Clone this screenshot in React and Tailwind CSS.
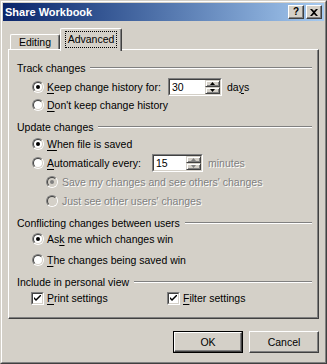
import React from "react";

const FONT = { fontFamily: '"Liberation Sans", Arial, sans-serif' };

function U({ children }) {
  return <span className="underline decoration-1 underline-offset-[2px]">{children}</span>;
}

function Radio({ checked, disabled }) {
  return (
    <span className="flex h-[12px] w-[12px] shrink-0 rounded-full border border-t-[#808080] border-l-[#808080] border-r-white border-b-white">
      <span
        className={
          "flex flex-1 items-center justify-center rounded-full border border-t-[#404040] border-l-[#404040] border-r-[#d4d0c8] border-b-[#d4d0c8] " +
          (disabled ? "bg-[#d4d0c8]" : "bg-white")
        }
      >
        {checked && (
          <span className={"h-[4px] w-[4px] rounded-full " + (disabled ? "bg-[#808080]" : "bg-black")} />
        )}
      </span>
    </span>
  );
}

function Check() {
  return (
    <span className="flex h-[13px] w-[13px] shrink-0 border border-t-[#808080] border-l-[#808080] border-r-white border-b-white">
      <span className="flex flex-1 items-center justify-center border border-t-[#404040] border-l-[#404040] border-r-[#d4d0c8] border-b-[#d4d0c8] bg-white">
        <svg width="7" height="7" viewBox="0 0 7 7">
          <path d="M0 2 L0 4 L2 6 L7 1 L7 -1 L2 4 Z" fill="#000" />
        </svg>
      </span>
    </span>
  );
}

function SpinBtn({ up, gray }) {
  const c = gray ? "#808080" : "#000";
  return (
    <div className="flex flex-1 items-center justify-center border border-t-[#d4d0c8] border-l-[#d4d0c8] border-r-[#404040] border-b-[#404040] bg-[#d4d0c8] shadow-[inset_1px_1px_0_#ffffff,inset_-1px_-1px_0_#808080]">
      <svg width="5" height="3" viewBox="0 0 5 3">
        {up ? <path d="M2.5 0 L5 3 L0 3 Z" fill={c} /> : <path d="M0 0 L5 0 L2.5 3 Z" fill={c} />}
      </svg>
    </div>
  );
}

function Spin({ value, w, gray }) {
  return (
    <div className={"flex h-[18px] border border-t-[#808080] border-l-[#808080] border-r-white border-b-white " + w}>
      <div className="flex flex-1 border border-t-[#404040] border-l-[#404040] border-r-[#d4d0c8] border-b-[#d4d0c8] bg-white">
        <span className="flex flex-1 items-center pl-[2px] text-black">{value}</span>
        <div className="flex w-[15px] flex-col">
          <SpinBtn up gray={gray} />
          <SpinBtn gray={gray} />
        </div>
      </div>
    </div>
  );
}

function GroupLabel({ children, mt }) {
  return (
    <div className={"flex h-[16px] items-center pl-[8px] pr-[6px] " + mt}>
      <span className="whitespace-nowrap">{children}</span>
      <span className="ml-[5px] h-[2px] flex-1 border-t border-t-[#808080] border-b border-b-white" />
    </div>
  );
}

const dis = "text-[#808080] [text-shadow:1px_1px_0_#ffffff]";

export default function App() {
  return (
    <div
      style={FONT}
      className="h-[364px] w-[327px] border border-t-[#d4d0c8] border-l-[#d4d0c8] border-r-[#404040] border-b-[#404040] bg-[#d4d0c8] text-[10.5px] leading-[13px] text-black"
    >
      <div className="flex h-full flex-col border border-t-white border-l-white border-r-[#808080] border-b-[#808080] p-px">
        {/* title bar */}
        <div className="flex h-[18px] items-center bg-gradient-to-r from-[#0a246a] to-[#a6caf0] pl-[2px] pr-[2px]">
          <span className="flex-1 text-[11px] font-bold text-white">Share Workbook</span>
          <div className="flex gap-[1px]">
            <span className="flex h-[14px] w-[16px] items-center justify-center border border-t-white border-l-white border-r-[#404040] border-b-[#404040] bg-[#d4d0c8] text-[10px] font-bold leading-none shadow-[inset_-1px_-1px_0_#808080]">
              ?
            </span>
            <span className="ml-[1px] flex h-[14px] w-[16px] items-center justify-center border border-t-white border-l-white border-r-[#404040] border-b-[#404040] bg-[#d4d0c8] shadow-[inset_-1px_-1px_0_#808080]">
              <svg width="8" height="7" viewBox="0 0 8 7">
                <path d="M0 0 L2 0 L4 2 L6 0 L8 0 L5 3.5 L8 7 L6 7 L4 5 L2 7 L0 7 L3 3.5 Z" fill="#000" />
              </svg>
            </span>
          </div>
        </div>

        {/* tabs */}
        <div className="ml-[5px] mt-[7px] flex h-[21px] items-end">
          <div className="ml-[2px] flex h-[15px] w-[50px] items-center justify-center rounded-t-[2px] border border-b-0 border-t-white border-l-white border-r-[#404040] shadow-[inset_-1px_0_0_#808080]">
            Editing
          </div>
          <div className="relative z-10 mb-[-2px] flex h-[23px] w-[62px] items-start justify-center rounded-t-[2px] border border-b-0 border-t-white border-l-white border-r-[#404040] bg-[#d4d0c8] pt-[2px] shadow-[inset_-1px_0_0_#808080]">
            <span className="border border-dotted border-black px-[2px] py-[1px]">Advanced</span>
          </div>
        </div>

        {/* panel */}
        <div className="ml-[5px] flex h-[270px] w-[311px] flex-col border border-t-white border-l-white border-r-[#404040] border-b-[#404040] shadow-[inset_-1px_-1px_0_#808080]">
          <GroupLabel mt="mt-[10px]">Track changes</GroupLabel>
          <div className="mt-[3px] flex h-[16px] items-center pl-[23px]">
            <Radio checked />
            <span className="ml-[3px] w-[121px]">
              <U>K</U>eep change history for:
            </span>
            <Spin value="30" w="w-[54px]" />
            <span className="ml-[5px]">
              da<U>y</U>s
            </span>
          </div>
          <div className="mt-[2px] flex h-[16px] items-center pl-[23px]">
            <Radio />
            <span className="ml-[3px]">
              <U>D</U>on't keep change history
            </span>
          </div>

          <GroupLabel mt="mt-[6px]">Update changes</GroupLabel>
          <div className="mt-[1px] flex h-[16px] items-center pl-[23px]">
            <Radio checked />
            <span className="ml-[3px]">
              <U>W</U>hen file is saved
            </span>
          </div>
          <div className="mt-[3px] flex h-[16px] items-center pl-[23px]">
            <Radio />
            <span className="ml-[3px] w-[105px]">
              <U>A</U>utomatically every:
            </span>
            <Spin value="15" w="w-[51px]" gray />
            <span className={"ml-[5px] " + dis}>minutes</span>
          </div>
          <div className="mt-[3px] flex h-[16px] items-center pl-[37px]">
            <Radio checked disabled />
            <span className={"ml-[4px] " + dis}>Save my changes and see others' changes</span>
          </div>
          <div className="mt-[3px] flex h-[16px] items-center pl-[37px]">
            <Radio disabled />
            <span className={"ml-[4px] " + dis}>Just see other users' changes</span>
          </div>

          <GroupLabel mt="mt-[6px]">Conflicting changes between users</GroupLabel>
          <div className="mt-0 flex h-[16px] items-center pl-[23px]">
            <Radio checked />
            <span className="ml-[3px]">
              As<U>k</U> me which changes win
            </span>
          </div>
          <div className="mt-[5px] flex h-[16px] items-center pl-[23px]">
            <Radio />
            <span className="ml-[3px]">
              <U>T</U>he changes being saved win
            </span>
          </div>

          <GroupLabel mt="mt-[6px]">Include in personal view</GroupLabel>
          <div className="mt-0 flex h-[16px] items-center pl-[22px]">
            <div className="flex w-[136px] items-center">
              <Check />
              <span className="ml-[3px]">
                <U>P</U>rint settings
              </span>
            </div>
            <div className="flex items-center">
              <Check />
              <span className="ml-[3px]">
                <U>F</U>ilter settings
              </span>
            </div>
          </div>
        </div>

        {/* buttons */}
        <div className="mt-[12px] flex justify-end gap-[6px] pr-[5px]">
          <div className="flex h-[22px] w-[70px] border border-black">
            <div className="flex flex-1 items-center justify-center border border-t-white border-l-white border-r-[#404040] border-b-[#404040] shadow-[inset_-1px_-1px_0_#808080]">
              OK
            </div>
          </div>
          <div className="flex h-[22px] w-[70px] items-center justify-center border border-t-white border-l-white border-r-[#404040] border-b-[#404040] shadow-[inset_-1px_-1px_0_#808080]">
            Cancel
          </div>
        </div>
      </div>
    </div>
  );
}
